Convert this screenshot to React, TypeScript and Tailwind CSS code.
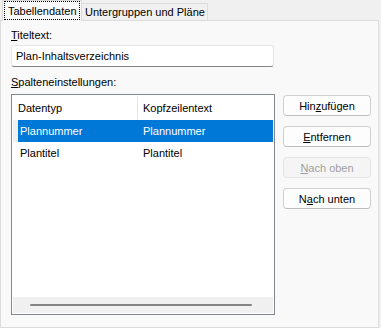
const rows = [
  { type: "Plannummer", header: "Plannummer", selected: true },
  { type: "Plantitel", header: "Plantitel", selected: false },
];

function Btn({ children, disabled }: { children: React.ReactNode; disabled?: boolean }) {
  return (
    <div
      className={
        disabled
          ? "w-[88px] h-[21px] flex items-center justify-center rounded-[4px] border border-[#e5e5e5] bg-[#f5f5f5] text-[#a0a0a0]"
          : "w-[88px] h-[21px] flex items-center justify-center rounded-[4px] border border-[#d0d0d0] border-b-[#bcbcbc] bg-[#fdfdfd] text-black"
      }
    >
      {children}
    </div>
  );
}

export default function App() {
  return (
    <div className="w-[381px] h-[328px] bg-[#f0f0f0] font-['Liberation_Sans',Arial,sans-serif] text-[11px] text-black leading-[16px]">
      <div className="flex items-start h-[20px] pl-[2px]">
        <div className="relative z-10 w-[80px] h-[21px] border border-b-0 border-[#d9d9d9] bg-[#f9f9f9] px-[1px]">
          <div className="h-[19px] border border-dotted border-black flex items-center pl-[3px] whitespace-nowrap">
            Tabellendaten
          </div>
        </div>
        <div className="mt-[3px] h-[17px] border border-b-0 border-l-0 border-[#dcdcdc] flex items-center pl-[3px] pr-[2px] whitespace-nowrap">
          Untergruppen und Pläne
        </div>
      </div>

      <div className="w-[379px] h-[308px] border border-[#dcdcdc] bg-[#f9f9f9] pl-[10px] pt-[6px]">
        <div className="h-[16px]">
          <u>T</u>iteltext:
        </div>
        <div className="mt-[2px] w-[263px] h-[22px] bg-white border border-[#e5e5e5] border-b-[#868686] rounded-[3px] flex items-center pl-[4px]">
          Plan-Inhaltsverzeichnis
        </div>
        <div className="mt-[7px] h-[16px]">
          <u>S</u>palteneinstellungen:
        </div>

        <div className="mt-[4px] flex items-start">
          <div className="w-[264px] h-[221px] border border-[#828790] bg-white p-px flex flex-col">
            <div className="h-[24px] flex items-center">
              <div className="w-[124px] pl-[5px]">Datentyp</div>
              <div className="w-px h-[22px] bg-[#e5e5e5]" />
              <div className="pl-[5px]">Kopfzeilentext</div>
            </div>
            {rows.map((r) => (
              <div key={r.type} className="h-[22px] flex">
                <div className={r.selected ? "w-[5px] bg-[#f0f0f0]" : "w-[5px]"} />
                <div
                  className={
                    r.selected
                      ? "flex-1 flex items-center bg-[#0078d7] text-white"
                      : "flex-1 flex items-center"
                  }
                >
                  <div className="w-[125px] pl-[2px]">{r.type}</div>
                  <div>{r.header}</div>
                </div>
              </div>
            ))}
            <div className="mt-auto h-[16px] bg-[#f0f0f0] flex items-center">
              <div className="ml-[17px] w-[222px] h-[2px] bg-[#858585] rounded-full" />
            </div>
          </div>

          <div className="ml-[8px] pt-px flex flex-col gap-[10px]">
            <Btn>
              Hin<u>z</u>ufügen
            </Btn>
            <Btn>
              <u>E</u>ntfernen
            </Btn>
            <Btn disabled>
              <u>N</u>ach oben
            </Btn>
            <Btn>
              N<u>a</u>ch unten
            </Btn>
          </div>
        </div>
      </div>
    </div>
  );
}
